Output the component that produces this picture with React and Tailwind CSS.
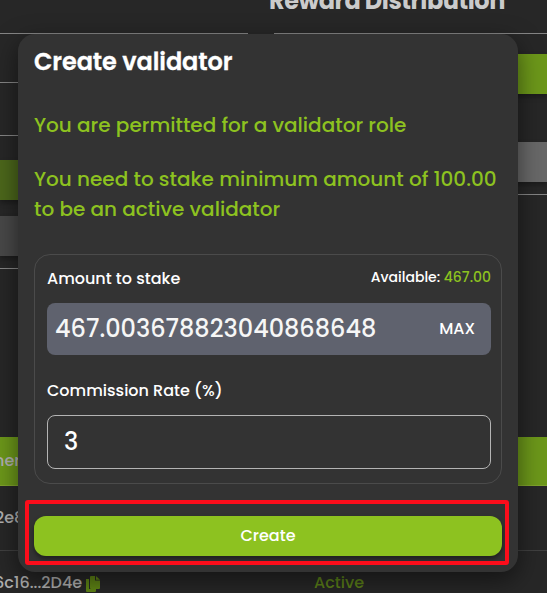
import React from "react";

const Divider = ({ className = "" }) => (
  <div className={`h-px bg-[#858585] ${className}`} />
);

const CopyIcon = () => (
  <svg width="14" height="16" viewBox="0 0 14 16" fill="#5f8415" className="mt-[2px] shrink-0">
    <path d="M0 3h3v10h7v2a1 1 0 0 1-1 1H1a1 1 0 0 1-1-1z" />
    <path d="M4 1a1 1 0 0 1 1-1h4v4.500h5V12a1 1 0 0 1-1 1H5a1 1 0 0 1-1-1z" />
    <path d="M10 0l4 3.700h-4z" />
  </svg>
);

function Dashboard() {
  return (
    <div className="flex h-full flex-col text-[#b0b0b0]">
      <div className="grid h-[437px] shrink-0 grid-cols-[248px_273px] gap-[26px]">
        <div className="flex flex-col pt-[33px]">
          <Divider />
          <Divider className="mt-12" />
          <Divider className="mt-[52px]" />
          <div className="mt-6 h-10 shrink-0 bg-[#4c671b] shadow-[0_3px_5px_rgba(0,0,0,0.3)]" />
          <div className="mt-4 h-10 shrink-0 bg-[#484848] shadow-[0_3px_5px_rgba(0,0,0,0.3)]" />
          <Divider className="mt-3" />
        </div>
        <div className="flex flex-col">
          <h2 className="-mt-[17px] -ml-[5px] h-[50px] whitespace-nowrap text-[24px] leading-[36px] font-bold tracking-[-0.48px] text-[#cbcbcb]">
            Reward Distribution
          </h2>
          <Divider />
          <div className="mt-5 h-10 shrink-0 bg-[#6c971a] shadow-[0_3px_5px_rgba(0,0,0,0.3)]" />
          <div className="mt-12 h-10 shrink-0 bg-[#686868] shadow-[0_3px_5px_rgba(0,0,0,0.3)]" />
          <Divider className="mt-3" />
        </div>
      </div>
      <div className="flex h-[49px] shrink-0 items-center border-b border-[#7fa32c] bg-[#6c971a] text-[16px] font-medium">
        <span className="-ml-[6px]">ner</span>
      </div>
      <div className="flex h-[65px] shrink-0 items-center border-b border-[#404040] text-[16px] font-medium">
        <span className="-ml-[5px]">2e8</span>
      </div>
      <div className="flex h-[64px] shrink-0 items-center text-[16px] font-medium">
        <div className="flex w-[314px] items-center gap-1">
          <span className="-ml-[6px]">6c16...2D4e</span>
          <CopyIcon />
        </div>
        <span className="text-[#5b7f18]">Active</span>
      </div>
    </div>
  );
}

function ValidatorModal() {
  return (
    <section className="absolute top-[34px] left-[18px] flex h-[538px] w-[500px] flex-col rounded-[17px] bg-[#333333] px-4 shadow-[0_8px_24px_rgba(0,0,0,0.5)]">
      <h1 className="mt-[10px] h-9 whitespace-nowrap text-[24px] leading-9 font-semibold tracking-[-0.1px] text-white [-webkit-text-stroke:0.3px_white]">
        Create validator
      </h1>
      <p className="mt-[30px] whitespace-nowrap text-[20px] leading-[30px] font-medium text-[#8dc220]">
        You are permitted for a validator role
      </p>
      <p className="mt-6 whitespace-nowrap text-[20px] leading-[30px] font-medium text-[#8dc220]">
        You need to stake minimum amount of 100.00
        <br />
        to be an active validator
      </p>
      <div className="mt-[30px] flex h-[230px] shrink-0 flex-col rounded-2xl border border-[#4b4b4b] pr-[10px] pl-3 text-white">
        <div className="mt-[11px] flex h-6 justify-between whitespace-nowrap">
          <label className="text-[16px] leading-[26px] font-medium">Amount to stake</label>
          <span className="text-[14px] leading-[22px] font-medium">
            Available: <span className="text-[#8dc220]">467.00</span>
          </span>
        </div>
        <div className="mt-[13px] flex h-[52px] shrink-0 items-center justify-between rounded-lg bg-[#5f626e] pr-4 pl-2">
          <span className="text-[24px] leading-9 font-medium text-[#f6f6f6]">467.003678823040868648</span>
          <span className="text-[16px] font-medium">MAX</span>
        </div>
        <label className="mt-6 text-[16px] leading-6 font-medium">Commission Rate (%)</label>
        <div className="mt-3 flex h-[54px] shrink-0 items-center rounded-lg border border-[#b4b4b4] px-4">
          <span className="text-[24px] leading-9 font-medium">3</span>
        </div>
      </div>
      <button className="mt-8 flex h-10 w-[468px] shrink-0 items-center justify-center rounded-[12px] bg-[#8dc220] text-[16px] font-medium text-white shadow-[0_3px_5px_rgba(0,0,0,0.4)]">
        Create
      </button>
      <div className="pointer-events-none absolute top-[466px] left-[7px] h-[65px] w-[484px] rounded-[3px] border-4 border-[#fc0d1b]" />
    </section>
  );
}

export default function App() {
  return (
    <main className="relative h-[593px] w-[547px] overflow-hidden bg-[#272727] font-[Poppins,Inter,sans-serif]">
      <Dashboard />
      <ValidatorModal />
    </main>
  );
}
